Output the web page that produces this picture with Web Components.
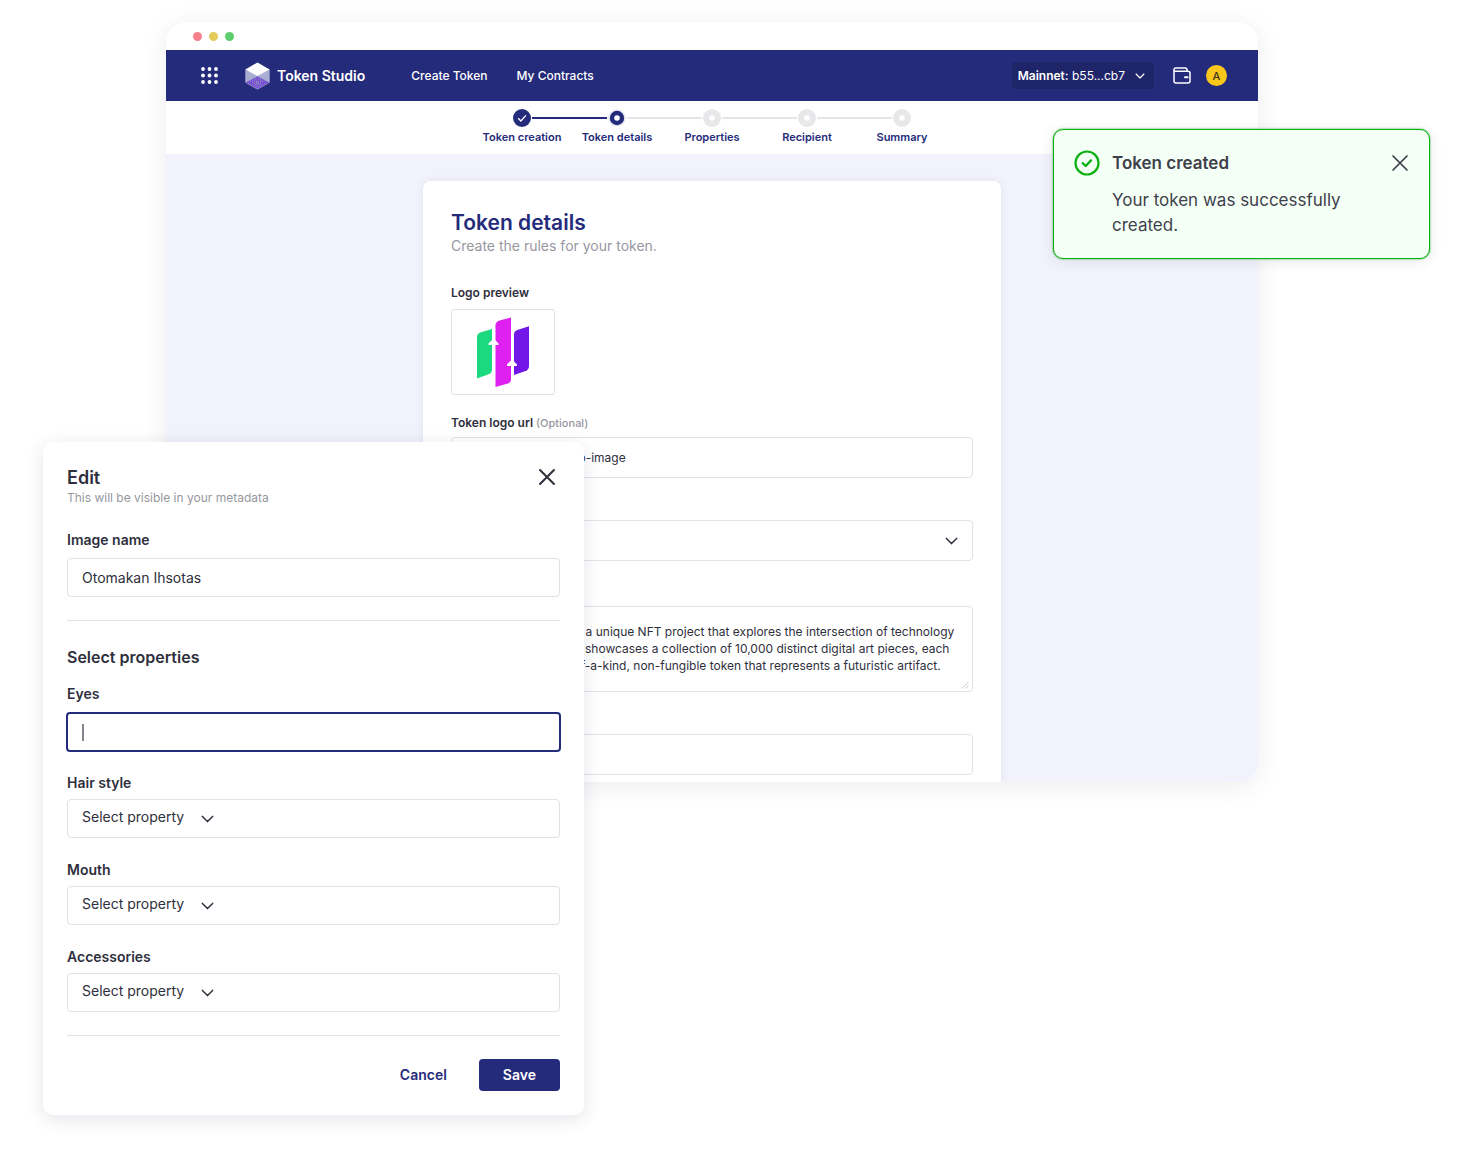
<!DOCTYPE html>
<html lang="en">
<head>
<meta charset="utf-8">
<meta name="viewport" content="width=device-width, initial-scale=1">
<title>Token Studio</title>
<style>
  :root {
    --brand: #252b7b;
    --ink: #2f2f3d;
    --muted: #97979f;
    --line: #e1e1e6;
    --canvas: #f2f2fc;
  }
  body {
    margin: 0;
    background: #fff;
    color: var(--ink);
    font-family: Inter, "Liberation Sans", sans-serif;
  }
</style>
</head>
<body>
<token-studio></token-studio>

<script>
const CHEVRON = `<svg class="chev" viewBox="0 0 14 8" aria-hidden="true"><path d="M1.5 1.2 7 6.8l5.500-5.600" fill="none" stroke="currentColor" stroke-width="1.600" stroke-linecap="round" stroke-linejoin="round"/></svg>`;
const CROSS = `<svg viewBox="0 0 18 18" aria-hidden="true"><path d="M2 2l14 14M16 2L2 16" fill="none" stroke="currentColor" stroke-linecap="round"/></svg>`;
const BASE = `*{box-sizing:border-box} button,input,select,textarea{font:inherit;color:inherit;margin:0;padding:0;border:0;background:none;outline:none;border-radius:0} svg{display:block;flex:none}`;

function define(name, css, render) {
  customElements.define(name, class extends HTMLElement {
    connectedCallback() {
      if (this.shadowRoot) return;
      const root = this.attachShadow({ mode: "open" });
      root.innerHTML = `<style>${BASE}${css}</style>${render(this)}`;
    }
  });
}

/* Labelled text box, text area or drop-down */
define("ts-field", `
  :host { display: flex; flex-direction: column; gap: var(--field-gap, 6px); }
  label { font-size: var(--label-size, 14px); line-height: var(--label-line, 20px); font-weight: 600; }
  small { font-size: 11px; font-weight: 500; color: var(--muted); }
  .box { display: flex; align-items: center; height: var(--box-height, 39px); padding: 0 14px;
         border: 1px solid var(--line); border-radius: 4px; background: #fff; font-size: var(--text-size, 14px); }
  input { flex: 1; min-width: 0; height: 100%; }
  .caret { width: 2px; height: 17px; background: #85858f; }
  :host([active]) .box { border: 2px solid var(--brand); height: 40px; margin: 0 -1px -1px; }
  .area { position: relative; height: auto; padding: 0; }
  textarea { display: block; width: 100%; height: 84px; padding: 16px 14px 0; line-height: 17px; resize: none; overflow: hidden; }
  .grip { position: absolute; right: 3px; bottom: 2px; width: 8px; height: 8px; }
  select { appearance: none; height: 100%; padding-bottom: 4px; }
  .chev { width: 13px; height: 8px; }
  .pick { gap: 16px; }
  :host([wide]) select { flex: 1; }
`, el => {
  const kind = el.getAttribute("kind") || "text";
  const note = el.hasAttribute("note") ? ` <small>${el.getAttribute("note")}</small>` : "";
  const label = `<label for="c">${el.getAttribute("label")}${note}</label>`;
  const value = el.getAttribute("value") || "";
  if (kind === "select")
    return `${label}<div class="box pick"><select id="c"><option>${value}</option></select>${CHEVRON}</div>`;
  if (kind === "area")
    return `${label}<div class="box area"><textarea id="c">${value}</textarea><svg class="grip" viewBox="0 0 8 8" aria-hidden="true"><path d="M1 7.500 7.500 1M4.500 7.500l3-3" stroke="#c9c9d0" fill="none"/></svg></div>`;
  return `${label}<div class="box">${el.hasAttribute("active") ? '<span class="caret"></span>' : ""}<input id="c" type="text" value="${value}"></div>`;
});

define("ts-navbar", `
  :host { display: flex; align-items: center; height: 51px; padding: 0 31px 0 35px; background: var(--brand); color: #fff; }
  .apps { width: 17px; height: 17px; cursor: pointer; }
  .brand { display: flex; align-items: center; gap: 7px; margin-left: 27px; font-size: 14px; font-weight: 600; color: inherit; text-decoration: none; }
  .brand svg { width: 25px; height: 28px; }
  nav { display: flex; gap: 29px; margin-left: 46px; font-size: 12px; font-weight: 500; }
  nav a { color: inherit; text-decoration: none; }
  .account { display: flex; align-items: center; height: 27px; margin-left: auto; padding: 0 9px 0 6px; border-radius: 3px;
             background: #1f2569; font-size: 12px; white-space: pre; }
  .account b { font-weight: 600; }
  .chev { width: 10px; height: 6px; margin-left: 10px; }
  .wallet { margin-left: 19px; }
  .wallet svg { width: 18px; height: 17px; }
  .avatar { display: grid; place-items: center; width: 21px; height: 21px; margin-left: 15px; border-radius: 50%;
            background: #fbc71b; color: #3b3521; font-size: 11px; font-weight: 500; }
`, () => `
  <button class="apps" aria-label="Apps"><svg viewBox="0 0 17 17" fill="#fff">${
    [2, 8.5, 15].map(y => [2, 8.5, 15].map(x => `<circle cx="${x}" cy="${y}" r="1.900"/>`).join("")).join("")
  }</svg></button>
  <a class="brand" href="#"><svg viewBox="0 0 25 28" aria-hidden="true">
    <path d="M.3 7.500 12.500 13 24.700 7.500V20.500L12.500 27.600.3 20.500z" fill="#aaaed3"/>
    <path d="M12.500.4 24.700 7.500 12.500 14 .3 7.500z" fill="#fff"/>
    <path d="M12.500 14 24.700 20.500 12.500 27.600.3 20.500z" fill="#8b83c4"/>
    <path d="M12.500 15.500 22 20.500 12.500 26 3 20.500z" fill="none" stroke="#6f2fe0" stroke-width="1.600" stroke-dasharray="1 1"/>
    <path d="M12.500 18 18.500 20.800 12.500 24 6.500 20.800z" fill="none" stroke="#6f2fe0" stroke-width="1.600" stroke-dasharray="1 1"/>
    <path d="M10 20.900h5" stroke="#6f2fe0" stroke-dasharray="1 1"/>
  </svg>Token Studio</a>
  <nav><a href="#">Create Token</a><a href="#">My Contracts</a></nav>
  <button class="account"><b>Mainnet:</b> b55...cb7${CHEVRON}</button>
  <button class="wallet" aria-label="Wallet"><svg viewBox="0 0 18 17" fill="none" stroke="#fff" stroke-width="1.500" stroke-linejoin="round">
    <path d="M1 4.200V14a2 2 0 0 0 2 2h12a2 2 0 0 0 2-2V6.200a2 2 0 0 0-2-2z"/>
    <path d="M1 4.200V2.600A1.600 1.600 0 0 1 2.600 1H12a2 2 0 0 1 2 2v1.200"/>
    <path d="M12 10.200h2.600" stroke-width="2" stroke-linecap="round"/>
  </svg></button>
  <button class="avatar">A</button>
`);

define("ts-step", `
  :host { display: flex; flex-direction: column; align-items: center; flex: 1; gap: 2px; --before: #e6e6ea; --after: #e6e6ea; }
  :host([state="done"]) { --after: var(--brand); }
  :host([state="current"]) { --before: var(--brand); }
  :host(:first-of-type) { --before: transparent; }
  :host(:last-of-type) { --after: transparent; }
  .track { display: flex; align-items: center; gap: 1px; width: 100%; height: 18px; }
  .track::before, .track::after { content: ""; flex: 1; height: 2px; background: var(--before); }
  .track::after { background: var(--after); }
  svg { width: 18px; height: 18px; }
  span { font-size: 11px; line-height: 16px; font-weight: 600; color: var(--brand); white-space: nowrap; }
`, el => {
  const state = el.getAttribute("state");
  const mark = state === "done"
    ? `<circle cx="9" cy="9" r="9" fill="#252b7b"/><path d="M5.200 9.300 7.900 12l5-5.600" fill="none" stroke="#fff" stroke-width="1.300"/>`
    : state === "current"
    ? `<circle cx="9" cy="9" r="9" fill="#ebebf3"/><circle cx="9" cy="9" r="7.200" fill="#252b7b"/><circle cx="9" cy="9" r="2.800" fill="#fff"/>`
    : `<circle cx="9" cy="9" r="9" fill="#e8e8eb"/><circle cx="9" cy="9" r="2.800" fill="#fff"/>`;
  return `<div class="track"><svg viewBox="0 0 18 18" aria-hidden="true">${mark}</svg></div><span><slot></slot></span>`;
});

define("ts-stepper", `
  :host { display: flex; justify-content: center; padding: 8px 0 9px; background: #fff; }
  div { display: flex; flex: 0 1 475px; }
`, () => `<div>
  <ts-step state="done">Token creation</ts-step><ts-step state="current">Token details</ts-step>
  <ts-step>Properties</ts-step><ts-step>Recipient</ts-step><ts-step>Summary</ts-step></div>`);

define("ts-details-form", `
  :host { display: block; max-width: 578px; margin: 0 auto; padding: 28px 28px 7px; background: #fff;
          border-radius: 8px 8px 0 0; box-shadow: 0 0 8px rgba(40,40,90,.07);
          --label-size: 12px; --label-line: 16px; --text-size: 12px; --box-height: 41px; }
  h1 { margin: 0; font-size: 21px; line-height: 28px; font-weight: 600; color: var(--brand); }
  p { margin: 0; font-size: 14px; line-height: 18px; color: var(--muted); }
  form { display: flex; flex-direction: column; gap: 20px; margin-top: 30px; }
  figure { display: flex; flex-direction: column; gap: 8px; margin: 0; }
  figcaption { font-size: 12px; line-height: 16px; font-weight: 600; }
  .preview { display: grid; place-items: center; width: 104px; height: 86px; border: 1px solid var(--line); border-radius: 3px; }
  .preview svg { width: 54px; height: 70px; }
  .area { --label-line: 19px; }
`, () => `
  <h1>Token details</h1>
  <p>Create the rules for your token.</p>
  <form>
    <figure>
      <figcaption>Logo preview</figcaption>
      <div class="preview"><svg viewBox="0 0 54 70" role="img" aria-label="Token logo">
        <path d="M1 61.500V20q0-3.500 4-4.800L16 12v40.500q0 3.500-4 5z" fill="#1bd97f"/>
        <path d="M19.500 70V8q0-3 4-4.500L35 .500V62q0 3.500-3 4.500z" fill="#de21f0"/>
        <path d="M38 58V17q0-3 4-4.300L53 9.300V49q0 3.500-3.500 5z" fill="#7316e8"/>
        <path d="M12.500 26.500q1-1 5-5.300 3.500 3.800 5 5.300v1.500H12.500z" fill="#fff"/>
        <path d="M31 47.500q1-1 5-5.300 3.500 3.800 5 5.300V49H38v4h-3v-4h-4z" fill="#fff"/>
      </svg></div>
    </figure>
    <ts-field label="Token logo url" note="(Optional)" value="https://token.art/logo-image"></ts-field>
    <ts-field kind="select" wide label="Category" value="Art"></ts-field>
    <ts-field class="area" kind="area" label="Description" value="Futuristic Artifacts is a unique NFT project that explores the intersection of technology and digital culture. It showcases a collection of 10,000 distinct digital art pieces, each of them just a one-of-a-kind, non-fungible token that represents a futuristic artifact."></ts-field>
    <ts-field label="Token supply"></ts-field>
  </form>
`);

define("ts-window", `
  :host { display: block; overflow: hidden; border-radius: 20px; background: var(--canvas); }
  .bar { display: flex; align-items: center; gap: 7px; height: 28px; padding: 1px 27px 0; background: #fff; }
  .bar i { width: 9px; height: 9px; border-radius: 50%; background: #f7808d; }
  .bar i:nth-child(2) { background: #e5cb5c; }
  .bar i:nth-child(3) { background: #5dcd6b; }
  main { padding: 27px 24px 0; }
`, () => `
  <div class="bar"><i></i><i></i><i></i></div>
  <ts-navbar></ts-navbar>
  <ts-stepper></ts-stepper>
  <main><ts-details-form></ts-details-form></main>
`);

define("ts-edit-dialog", `
  :host { display: block; padding: 24px; border-radius: 10px; background: #fff; box-shadow: 0 4px 18px rgba(40,40,90,.12); }
  header { display: flex; justify-content: space-between; align-items: flex-start; }
  h2 { margin: 0; font-size: 18px; line-height: 24px; font-weight: 600; }
  header p { margin: 0; font-size: 12px; line-height: 16px; color: var(--muted); }
  .close { padding: 2px 4px; cursor: pointer; }
  .close svg { width: 18px; height: 18px; stroke-width: 2; }
  form { display: flex; flex-direction: column; margin-top: 24px; }
  hr { width: 100%; height: 1px; margin: 23px 0; border: 0; background: var(--line); }
  h3 { margin: 3px 0 17px; font-size: 16px; line-height: 20px; font-weight: 600; }
  .text { --field-gap: 8px; }
  .group { display: flex; flex-direction: column; gap: 22px; }
  footer { display: flex; justify-content: flex-end; align-items: center; gap: 8px; font-size: 14px; font-weight: 600; }
  footer button { height: 32px; padding: 0 24px 1px; border-radius: 4px; color: var(--brand); cursor: pointer; }
  footer .save { background: var(--brand); color: #fff; }
`, () => `
  <header><div><h2>Edit</h2><p>This will be visible in your metadata</p></div>
    <button class="close" aria-label="Close">${CROSS}</button></header>
  <form>
    <ts-field class="text" label="Image name" value="Otomakan Ihsotas"></ts-field>
    <hr>
    <h3>Select properties</h3>
    <div class="group">
      <ts-field class="text" label="Eyes" active></ts-field>
      <ts-field kind="select" label="Hair style" value="Select property"></ts-field>
      <ts-field kind="select" label="Mouth" value="Select property"></ts-field>
      <ts-field kind="select" label="Accessories" value="Select property"></ts-field>
    </div>
    <hr>
    <footer><button type="button">Cancel</button><button type="button" class="save">Save</button></footer>
  </form>
`);

define("ts-toast", `
  :host { display: grid; grid-template-columns: 26px 1fr auto; align-items: start; column-gap: 12px; padding: 20px;
          border: 1px solid #0bb112; border-radius: 10px; background: #f4fff6; box-shadow: 0 0 2px #0bb112, 0 2px 14px rgba(40,40,90,.1); color: #3f3f4c; }
  .ok { width: 26px; height: 26px; }
  h2 { margin: 0; font-size: 17px; line-height: 26px; font-weight: 600; }
  p { margin: 12px 0 0; font-size: 17px; line-height: 25px; }
  button { padding: 4px 0; cursor: pointer; }
  button svg { width: 18px; height: 18px; stroke-width: 1.700; }
`, () => `
  <svg class="ok" viewBox="0 0 26 26" fill="none" stroke="#0bb112" aria-hidden="true">
    <circle cx="13" cy="13" r="11.500" stroke-width="2.200"/>
    <path d="M8.700 13.200l3 2.800 5.300-5.600" stroke-width="2.300" stroke-linecap="round" stroke-linejoin="round"/></svg>
  <div><h2>Token created</h2><p>Your token was successfully created.</p></div>
  <button aria-label="Dismiss">${CROSS}</button>
`);

define("token-studio", `
  :host { display: block; position: relative; min-height: 100vh; overflow: hidden; padding: 22px 15% 0 166px; }
  ts-window { box-shadow: 0 4px 26px rgba(30,30,60,.08); }
  ts-edit-dialog { position: absolute; left: 43px; top: 442px; width: 541px; }
  ts-toast { position: absolute; right: 50px; top: 129px; width: 377px; }
`, () => `<ts-window></ts-window><ts-toast role="status"></ts-toast><ts-edit-dialog role="dialog" aria-label="Edit"></ts-edit-dialog>`);
</script>
</body>
</html>
